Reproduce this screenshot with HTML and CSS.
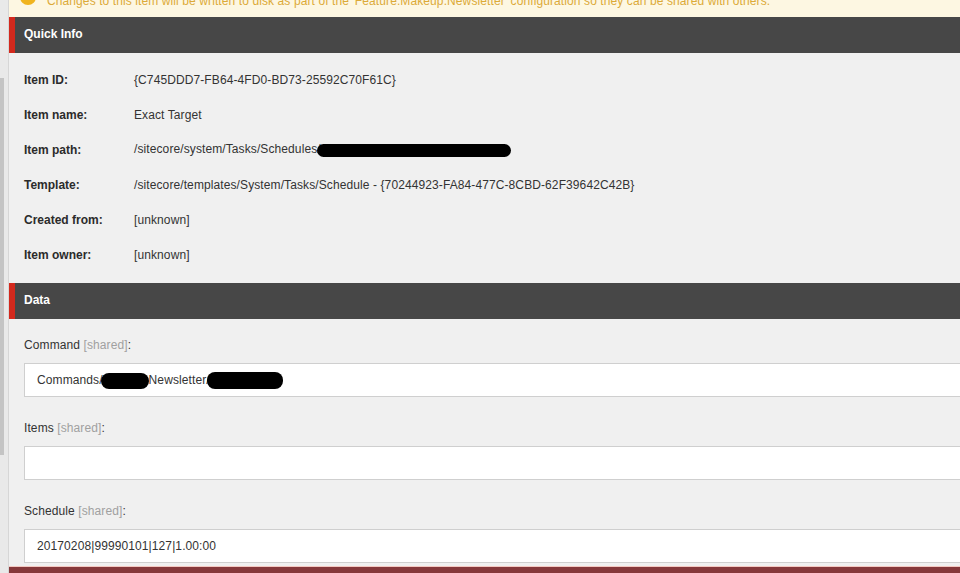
FILE: index.html
```html
<!DOCTYPE html>
<html lang="en">
<head>
    <meta charset="UTF-8">
    <title>Content Editor - Exact Target</title>
    <link rel="stylesheet" href="styles.css">
</head>
<body>
    <div class="side-scroll">
        <div class="thumb"></div>
    </div>
    <div class="editor">
        <div class="warning">
            <span class="warning-icon"></span>
            <span class="warning-text">Changes to this item will be written to disk as part of the 'Feature.Makeup.Newsletter' configuration so they can be shared with others.</span>
        </div>

        <div class="section-head">Quick Info</div>
        <div class="info">
            <div class="info-row"><div class="info-label">Item ID:</div><div class="info-value">{C745DDD7-FB64-4FD0-BD73-25592C70F61C}</div></div>
            <div class="info-row"><div class="info-label">Item name:</div><div class="info-value">Exact Target</div></div>
            <div class="info-row"><div class="info-label">Item path:</div><div class="info-value">/sitecore/system/Tasks/Schedules/<span class="redact redact-path"></span></div></div>
            <div class="info-row"><div class="info-label">Template:</div><div class="info-value">/sitecore/templates/System/Tasks/Schedule - {70244923-FA84-477C-8CBD-62F39642C42B}</div></div>
            <div class="info-row"><div class="info-label">Created from:</div><div class="info-value">[unknown]</div></div>
            <div class="info-row"><div class="info-label">Item owner:</div><div class="info-value">[unknown]</div></div>
        </div>

        <div class="section-head">Data</div>
        <div class="fields">
            <div class="field">
                <div class="field-label">Command <span class="shared">[shared]</span>:</div>
                <div class="field-input">Commands/<span class="redact redact-a"></span>Newsletter/<span class="redact redact-b"></span></div>
            </div>
            <div class="field">
                <div class="field-label">Items <span class="shared">[shared]</span>:</div>
                <div class="field-input"></div>
            </div>
            <div class="field">
                <div class="field-label">Schedule <span class="shared">[shared]</span>:</div>
                <div class="field-input">20170208|99990101|127|1.00:00</div>
            </div>
        </div>
        <div class="footer-bar"></div>
    </div>
</body>
</html>
```

FILE: styles.css
```css
body {
    margin: 0;
    height: 573px;
    overflow: hidden;
    display: flex;
    background-color: #f0f0f0;
    font-family: "Liberation Sans", Arial, sans-serif;
    font-size: 12px;
    color: #333;
}
.side-scroll {
    width: 8px;
    flex-shrink: 0;
    background: #e9e9e9;
    border-right: 1px solid #d6d6d6;
    padding-top: 78px;
}
.thumb {
    width: 4px;
    height: 377px;
    background: #c4c4c4;
}
.editor {
    flex: 1;
    min-width: 0;
    overflow: hidden;
}
.warning {
    height: 17px;
    background: #fdf7e2;
    display: flex;
    align-items: flex-start;
    overflow: hidden;
    white-space: nowrap;
}
.warning-icon {
    width: 16px;
    height: 16px;
    margin: -11px 0 0 11px;
    border-radius: 50%;
    background: #f0b41e;
    flex-shrink: 0;
}
.warning-text {
    margin: -6px 0 0 11px;
    line-height: 14px;
    color: #dcaa38;
    letter-spacing: 0.1px;
}
.section-head {
    height: 36px;
    line-height: 35px;
    background: #474747;
    border-left: 6px solid #d3291d;
    padding-left: 9px;
    color: #fff;
    font-weight: bold;
}
.info {
    padding: 9px 0 11px 15px;
}
.info-row {
    display: flex;
    height: 35px;
    align-items: center;
}
.info-label {
    width: 110px;
    font-weight: bold;
    color: #2b2b2b;
}
.info-value {
    white-space: nowrap;
    color: #333;
    letter-spacing: 0.1px;
}
.redact {
    display: inline-block;
    background: #000;
    vertical-align: middle;
    border-radius: 8px;
}
.redact-path {
    width: 194px;
    height: 13px;
    margin-left: -4px;
}
.redact-a {
    width: 48px;
    height: 16px;
    margin-left: -2px;
}
.redact-b {
    width: 76px;
    height: 17px;
    margin-left: -3px;
}
.fields {
    padding: 19px 0 0 15px;
}
.field {
    margin-bottom: 24px;
}
.field:last-child {
    margin-bottom: 3px;
}
.field-label {
    line-height: 14px;
    margin-bottom: 11px;
    color: #333;
    letter-spacing: 0.1px;
}
.shared {
    color: #a0a0a0;
}
.field-input {
    height: 32px;
    line-height: 32px;
    margin-right: -20px;
    background: #fff;
    border: 1px solid #cfcfcf;
    padding-left: 12px;
    color: #333;
    white-space: nowrap;
    letter-spacing: 0.1px;
}
.footer-bar {
    height: 6px;
    background: #86383a;
    border-top: 1px solid #f3c9c2;
}
```
